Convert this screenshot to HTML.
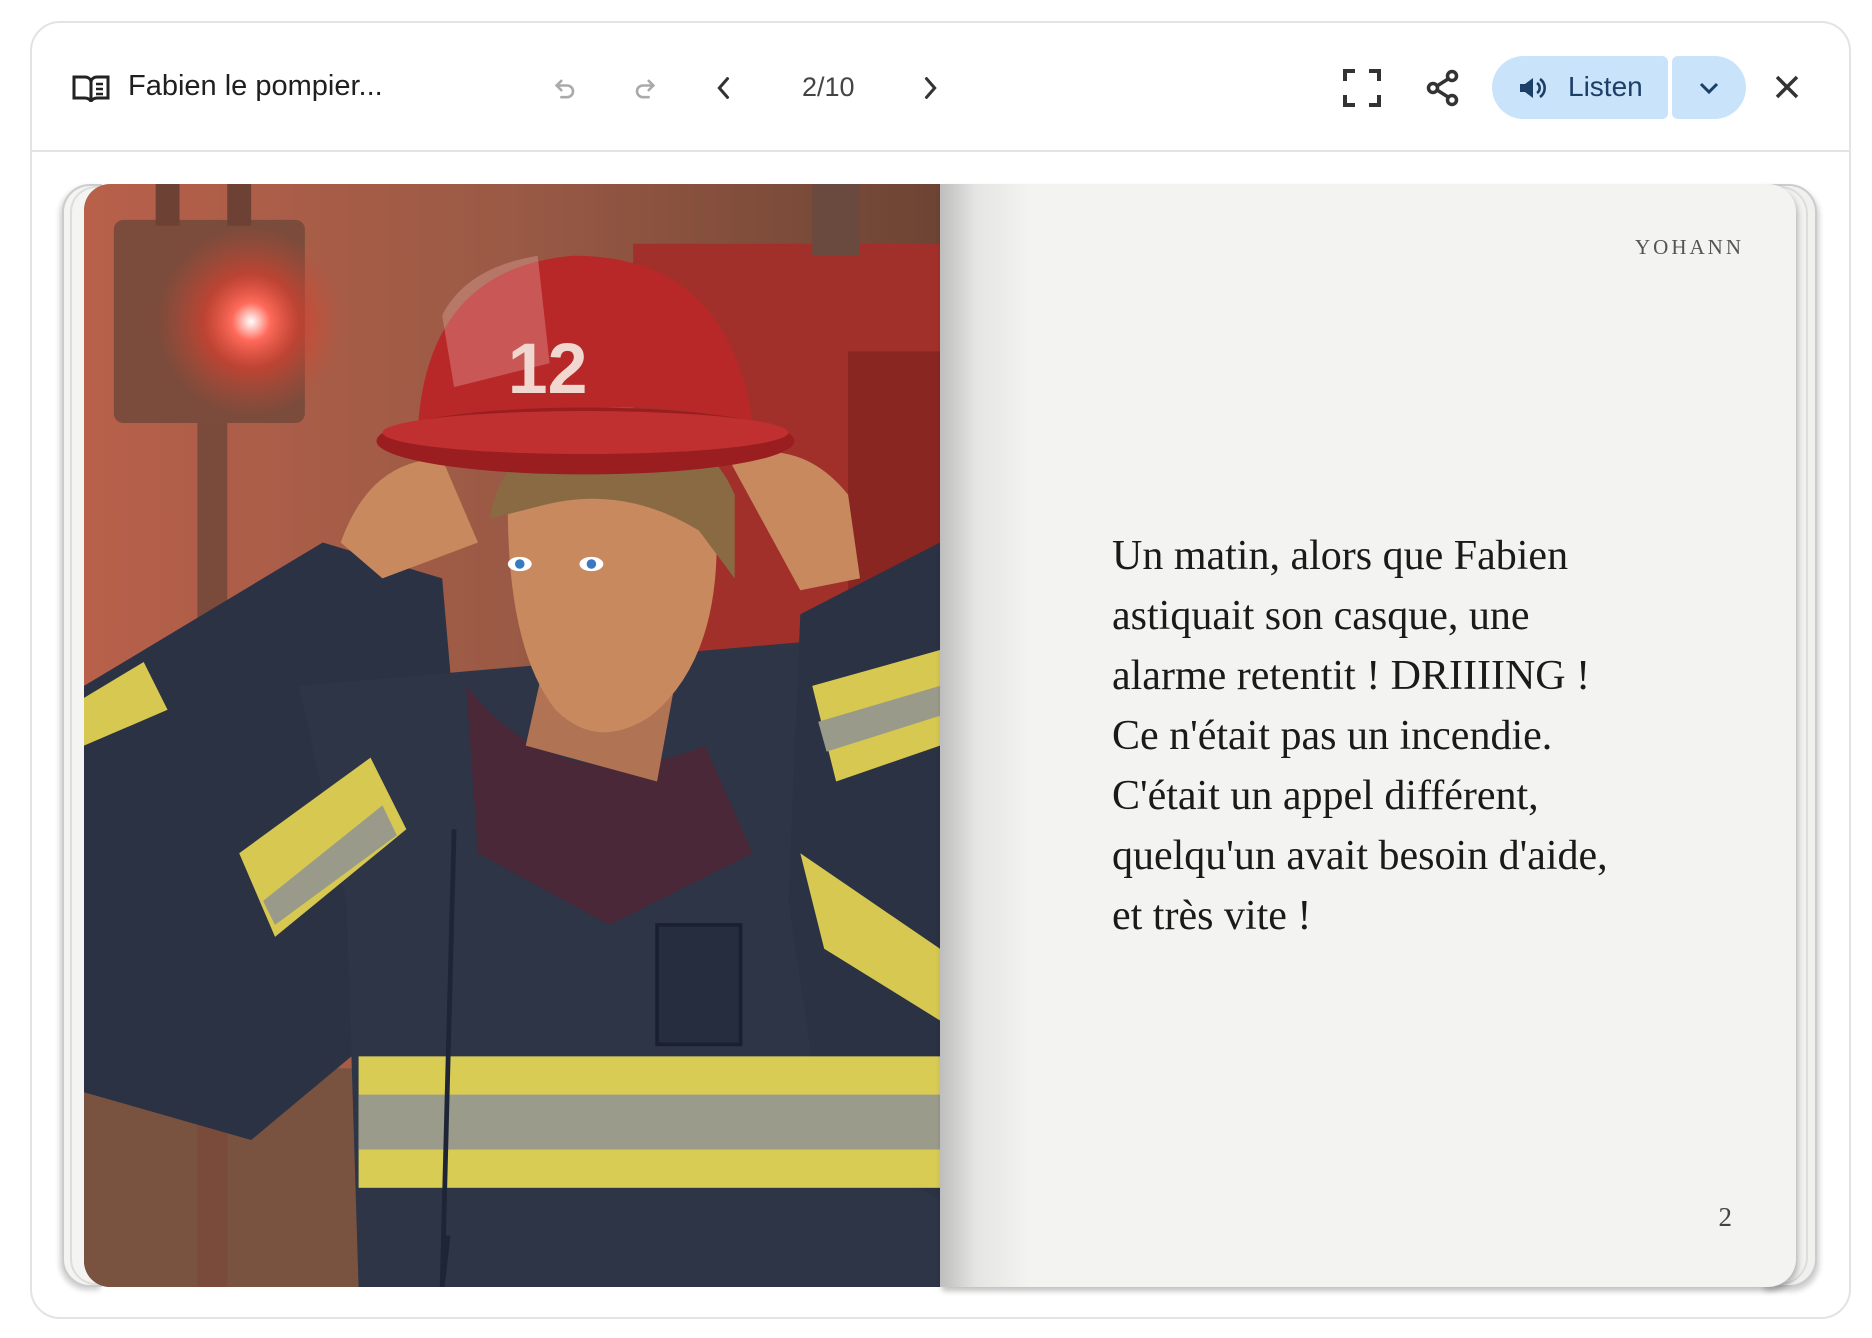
<!DOCTYPE html>
<html><head><meta charset="utf-8"><style>
*{margin:0;padding:0;box-sizing:border-box}
body{width:1872px;height:1338px;background:#fff;position:relative;overflow:hidden;font-family:"Liberation Sans",sans-serif}
.card{position:absolute;left:30px;top:21px;width:1821px;height:1298px;border:2px solid #e3e3e3;border-radius:30px;background:#fff}
.hdr{position:absolute;left:0;top:0;right:0;height:129px;border-bottom:2px solid #e3e3e3}
.abs{position:absolute}
.title{left:96px;top:47px;font-size:29px;color:#1f1f1f}
.pg{left:770px;top:49px;font-size:27px;color:#444}
.listen{left:1460px;top:33px;width:176px;height:63px;background:#c8e3fa;border-radius:32px 6px 6px 32px}
.listen span{position:absolute;left:76px;top:15px;font-size:28px;color:#1b3f66}
.drop{left:1640px;top:33px;width:74px;height:63px;background:#c8e3fa;border-radius:6px 32px 32px 6px}
.book{position:absolute;left:30px;top:161px;width:1755px;height:1103px}
.right{position:absolute;left:878px;top:0;width:856px;height:1103px;background:#f3f3f2;border-radius:0 28px 28px 0;box-shadow:2px 4px 6px rgba(0,0,0,.25)}
.gut{position:absolute;left:0;top:0;width:90px;height:100%;background:linear-gradient(90deg,rgba(0,0,0,.22),rgba(0,0,0,.06) 40%,rgba(0,0,0,0))}
.txt{position:absolute;left:172px;top:342px;font-family:"Liberation Serif",serif;font-size:42px;line-height:60px;color:#1a1a1a;white-space:nowrap}
.yo{position:absolute;right:52px;top:51px;font-family:"Liberation Serif",serif;font-size:21px;letter-spacing:3px;color:#555}
.num{position:absolute;right:64px;top:1018px;font-family:"Liberation Serif",serif;font-size:27px;color:#444}
</style></head><body>
<div class="card">
 <div class="hdr">
  <svg class="abs" style="left:40px;top:50px" width="38" height="32" viewBox="0 0 38 32" fill="none" stroke="#222" stroke-width="3"><path d="M2 4h11c3 0 6 2 6 5v20c0-2-3-4-6-4H2z"/><path d="M36 4H25c-3 0-6 2-6 5v20c0-2 3-4 6-4h11z"/><path d="M24 11h7M24 16h7M24 21h7" stroke-width="2.5"/></svg>
  <div class="abs title">Fabien le pompier...</div>
  <svg class="abs" style="left:520px;top:52px" width="28" height="28" viewBox="0 0 24 24" fill="none" stroke="#aaa" stroke-width="2.2" stroke-linecap="round"><path d="M8 5L4 9l4 4"/><path d="M4 9h9a5 5 0 010 10H8"/></svg>
  <svg class="abs" style="left:598px;top:52px" width="28" height="28" viewBox="0 0 24 24" fill="none" stroke="#aaa" stroke-width="2.2" stroke-linecap="round"><path d="M16 5l4 4-4 4"/><path d="M20 9h-9a5 5 0 000 10h5"/></svg>
  <svg class="abs" style="left:678px;top:50px" width="28" height="30" viewBox="0 0 24 24" fill="none" stroke="#333" stroke-width="2.6" stroke-linecap="round"><path d="M15 4l-7 8 7 8"/></svg>
  <div class="abs pg">2/10</div>
  <svg class="abs" style="left:884px;top:50px" width="28" height="30" viewBox="0 0 24 24" fill="none" stroke="#333" stroke-width="2.6" stroke-linecap="round"><path d="M9 4l7 8-7 8"/></svg>
  <svg class="abs" style="left:1311px;top:46px" width="38" height="38" viewBox="0 0 38 38" fill="none" stroke="#333" stroke-width="4"><path d="M2 12V2h10M26 2h10v10M36 26v10H26M12 36H2V26"/></svg>
  <svg class="abs" style="left:1393px;top:46px" width="36" height="38" viewBox="0 0 36 38" fill="none" stroke="#333" stroke-width="3.5"><circle cx="27" cy="7" r="4.5"/><circle cx="8" cy="19" r="4.5"/><circle cx="27" cy="31" r="4.5"/><path d="M12 17l11-7M12 21l11 7"/></svg>
  <div class="abs listen"><svg class="abs" style="left:26px;top:20px" width="30" height="24" viewBox="0 0 30 24"><path d="M2 8h5l8-6v20l-8-6H2z" fill="#1b3f66"/><path d="M19 7a6 6 0 010 10M22 3a11 11 0 010 18" stroke="#1b3f66" stroke-width="2.6" fill="none"/></svg><span>Listen</span></div>
  <div class="abs drop"><svg class="abs" style="left:26px;top:24px" width="22" height="16" viewBox="0 0 22 16" fill="none" stroke="#1b3f66" stroke-width="3"><path d="M3 4l8 8 8-8"/></svg></div>
  <svg class="abs" style="left:1742px;top:51px" width="26" height="26" viewBox="0 0 26 26" stroke="#333" stroke-width="3.5"><path d="M3 3l20 20M23 3L3 23"/></svg>
 </div>
 <div class="book">
  <div class="abs" style="left:0;top:0;width:40px;height:1103px;border:2px solid #ccc;border-right:none;border-radius:28px 0 0 28px;background:#f4f4f2;box-shadow:-2px 3px 6px rgba(0,0,0,.2)"></div>
  <div class="abs" style="left:8px;top:2px;width:40px;height:1099px;border:2px solid #ddd;border-right:none;border-radius:26px 0 0 26px;background:#f4f4f2"></div>
  <div class="abs" style="left:1700px;top:0;width:55px;height:1103px;border:2px solid #ccc;border-left:none;border-radius:0 28px 28px 0;background:#f0f0ee;box-shadow:2px 4px 6px rgba(0,0,0,.2)"></div>
  <div class="abs" style="left:1700px;top:2px;width:46px;height:1099px;border:2px solid #ddd;border-left:none;border-radius:0 28px 28px 0;background:#f2f2f0"></div>
  <svg class="abs" style="left:22px;top:0;border-radius:26px 0 0 26px" width="856" height="1103" viewBox="0 0 717 923" preserveAspectRatio="none">
   <defs>
    <linearGradient id="bg" x1="0" x2="1"><stop offset="0" stop-color="#b8604a"/><stop offset=".5" stop-color="#9a5a45"/><stop offset="1" stop-color="#6d4434"/></linearGradient>
    <radialGradient id="glow"><stop offset="0" stop-color="#fff"/><stop offset=".2" stop-color="#ff6a5a"/><stop offset=".5" stop-color="#d8402f" stop-opacity=".7"/><stop offset="1" stop-color="#c0503a" stop-opacity="0"/></radialGradient>
   </defs>
   <rect width="717" height="923" fill="url(#bg)"/>
   <rect x="0" y="740" width="717" height="183" fill="#7a5240"/>
   <rect x="460" y="50" width="257" height="720" fill="#a2302a"/>
   <rect x="640" y="140" width="77" height="600" fill="#8a2622"/>
   <rect x="610" y="0" width="40" height="60" fill="#6a4a3e"/>
   <rect x="95" y="200" width="25" height="723" fill="#7a4a3a"/>
   <rect x="25" y="30" width="160" height="170" rx="8" fill="#7b4b3b"/>
   <rect x="60" y="0" width="20" height="35" fill="#6d4234"/><rect x="120" y="0" width="20" height="35" fill="#6d4234"/>
   <circle cx="140" cy="115" r="80" fill="url(#glow)"/>
   <path d="M0 420 L200 300 L300 330 L320 560 L260 700 L140 800 L0 760Z" fill="#2a3244"/>
   <path d="M180 420 L640 380 L717 460 L717 923 L230 923 L220 600Z" fill="#2d3547"/>
   <path d="M600 360 L717 300 L717 850 L620 800 L590 600Z" fill="#2a3244"/>
   <path d="M320 420 Q400 520 520 470 L560 560 L440 620 L330 560Z" fill="#4a2838"/>
   <path d="M370 470 L390 380 L500 390 L480 500 Z" fill="#b07454"/>
   <path d="M355 270 Q355 200 430 200 Q530 200 530 300 Q530 400 475 445 Q430 475 395 440 Q355 390 355 270Z" fill="#c8895f"/>
   <path d="M340 280 Q350 210 440 200 Q520 200 545 260 L545 330 L515 290 Q450 250 380 270 Z" fill="#8a6a42"/>
   <ellipse cx="365" cy="318" rx="10" ry="6" fill="#fff"/><ellipse cx="425" cy="318" rx="10" ry="6" fill="#fff"/>
   <circle cx="365" cy="318" r="4" fill="#3a7ac0"/><circle cx="425" cy="318" r="4" fill="#3a7ac0"/>
   <path d="M215 300 Q240 230 300 230 L330 300 L250 330Z" fill="#c8895f"/>
   <path d="M540 230 Q600 210 640 260 L650 330 L600 340Z" fill="#c8895f"/>
   <path d="M280 200 Q290 70 410 60 Q540 60 560 200 Q480 180 400 190 Q320 200 280 200Z" fill="#b82828"/>
   <path d="M300 110 Q320 70 380 60 L390 150 L310 170Z" fill="#e8b0a8" opacity=".35"/>
   <text x="355" y="175" font-family="Liberation Sans" font-weight="bold" font-size="60" fill="#f0d8d0">12</text>
   <ellipse cx="420" cy="215" rx="175" ry="28" fill="#9a1e20"/>
   <ellipse cx="420" cy="208" rx="170" ry="18" fill="#c03030"/>
   <path d="M130 560 L240 480 L270 540 L160 630Z" fill="#d6c850"/>
   <path d="M150 600 L250 520 L262 545 L160 620Z" fill="#9a9a8a"/>
   <path d="M50 400 L0 430 L0 470 L70 440Z" fill="#d6c850"/>
   <path d="M610 420 L717 390 L717 470 L630 500Z" fill="#d6c850"/>
   <path d="M615 450 L717 420 L717 445 L622 475Z" fill="#9a9a8a"/>
   <path d="M600 560 L717 640 L717 700 L620 640Z" fill="#d6c850"/>
   <rect x="230" y="730" width="487" height="110" fill="#d8cc55"/>
   <rect x="230" y="762" width="487" height="46" fill="#9b9b8c"/>
   <path d="M305 880 L300 923 M310 540 L300 923" stroke="#1e2536" stroke-width="4"/>
   <rect x="480" y="620" width="70" height="100" fill="#252d3e" stroke="#1a2030" stroke-width="3"/>
  </svg>
  <div class="right">
   <div class="gut"></div>
   <div class="yo">YOHANN</div>
   <div class="txt">Un matin, alors que Fabien<br>astiquait son casque, une<br>alarme retentit ! DRIIIING !<br>Ce n'était pas un incendie.<br>C'était un appel différent,<br>quelqu'un avait besoin d'aide,<br>et très vite !</div>
   <div class="num">2</div>
  </div>
 </div>
</div>
</body></html>
